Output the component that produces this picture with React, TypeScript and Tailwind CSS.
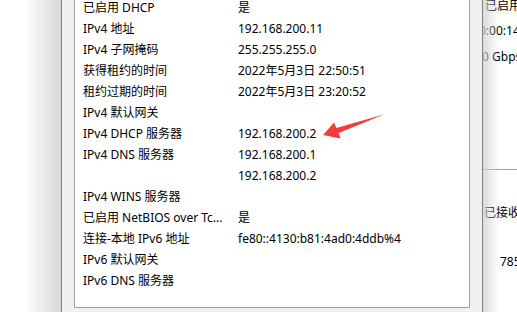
const rows: [string, string][] = [
  ["已启用 DHCP", "是"],
  ["IPv4 地址", "192.168.200.11"],
  ["IPv4 子网掩码", "255.255.255.0"],
  ["获得租约的时间", "2022年5月3日 22:50:51"],
  ["租约过期的时间", "2022年5月3日 23:20:52"],
  ["IPv4 默认网关", ""],
  ["IPv4 DHCP 服务器", "192.168.200.2"],
  ["IPv4 DNS 服务器", "192.168.200.1"],
  ["", "192.168.200.2"],
  ["IPv4 WINS 服务器", ""],
  ["已启用 NetBIOS over Tc...", "是"],
  ["连接-本地 IPv6 地址", "fe80::4130:b81:4ad0:4ddb%4"],
  ["IPv6 默认网关", ""],
  ["IPv6 DNS 服务器", ""],
]

function DetailsList() {
  return (
    <div className="relative flex-1 overflow-hidden border-x border-b border-[#a0a0a0] bg-white">
      <div className="-mt-[3px] flex flex-col pl-[8px]">
        {rows.map(([label, value], i) => (
          <div key={i} className="flex h-[21px] items-center whitespace-nowrap text-[12px] leading-[21px] text-black">
            <span className="w-[155px] shrink-0 overflow-hidden">{label}</span>
            <span>{value}</span>
          </div>
        ))}
      </div>
    </div>
  )
}

function BehindWindow() {
  return (
    <div className="relative flex-1 overflow-hidden bg-white text-[12px] leading-[16px] text-black">
      <div className="flex flex-col whitespace-nowrap">
        <span className="-mt-[2px] ml-[2px]">已启用</span>
        <span className="-ml-[4px] mt-[9px]">0:00:14</span>
        <span className="-ml-[11px] mt-[10px]">1.0 Gbps</span>
        <div className="mt-[104px] h-px bg-[#a0a0a0]" />
        <span className="ml-[1px] mt-[35px]">已接收</span>
        <span className="ml-[17px] mt-[33px]">785</span>
      </div>
      {/* shadow of the dialog */}
      <div className="pointer-events-none absolute inset-y-0 left-0 w-[16px] bg-gradient-to-r from-[#d2d2d2] to-transparent opacity-80" />
    </div>
  )
}

export default function App() {
  return (
    <div
      className="relative flex h-[312px] w-[517px] overflow-hidden bg-white"
      style={{ fontFamily: '"Noto Sans", "Noto Sans CJK SC", sans-serif' }}
    >
      <div className="w-[61px] shrink-0 bg-gradient-to-r from-white from-40% to-[#d8d8d8]" />
      <div className="flex w-[422px] shrink-0 flex-col border-x border-[#808080] bg-[#f0f0f0] px-[12px] pb-[4px]">
        <DetailsList />
      </div>
      <BehindWindow />

      {/* annotation arrow */}
      <svg className="pointer-events-none absolute left-0 top-0" width="517" height="312">
        <path d="M323,135 L334,122.5 L336.3,128 L384.5,114.3 L338.6,133 L340.5,138.5 Z" fill="#f73b3b" />
      </svg>
    </div>
  )
}
